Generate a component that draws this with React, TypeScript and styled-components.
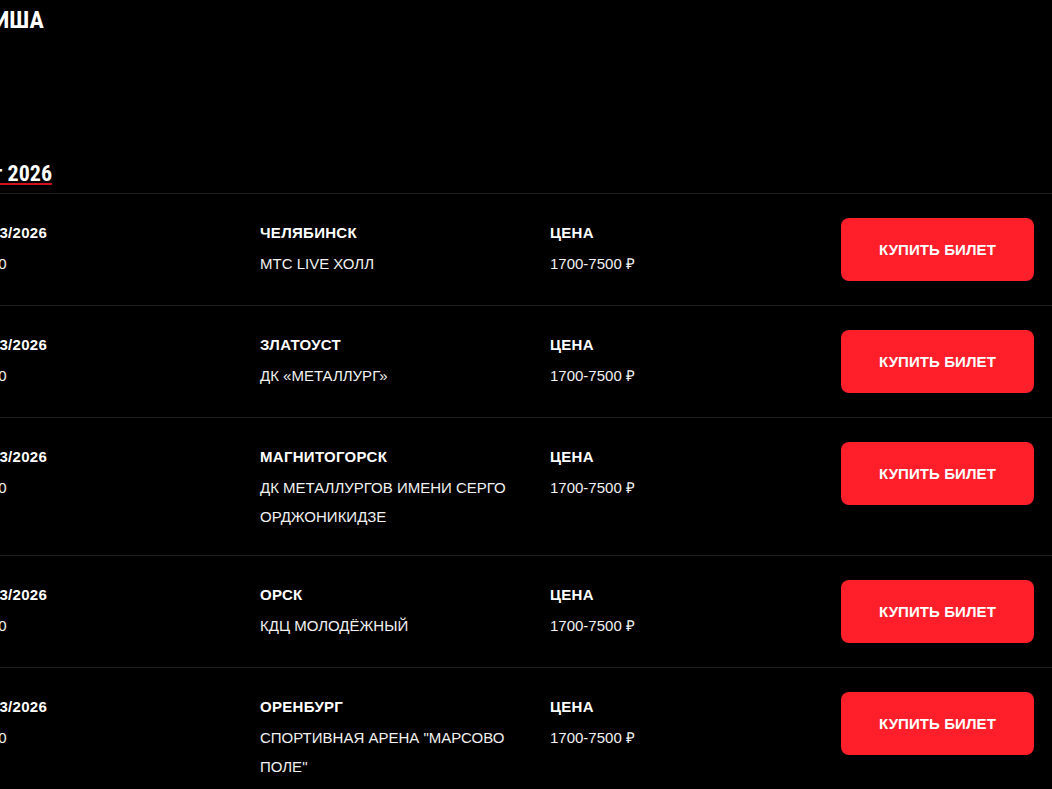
import React from "react";
import styled, { createGlobalStyle } from "styled-components";

const GlobalStyle = createGlobalStyle`
  html, body {
    margin: 0;
    padding: 0;
    background: #000;
  }
  body {
    font-family: "Liberation Sans", Arial, sans-serif;
    color: #fff;
    overflow: hidden;
  }
`;

const Page = styled.main`
  margin-left: -31px;
  width: calc(100% + 31px);
  background: #000;
  min-height: 789px;
`;

const Title = styled.h1`
  margin: 0;
  padding-top: 8px;
  margin-left: -6px;
  font-family: "Roboto Condensed", "DejaVu Sans Condensed", "Liberation Sans Narrow", sans-serif;
  font-weight: 700;
  font-size: 24px;
  line-height: 24px;
  text-transform: uppercase;
  color: #fff;
`;

const MonthHeading = styled.h2`
  display: inline-block;
  margin: 131px 0 8px 0;
  margin-left: -14px;
  font-family: "Roboto Condensed", "DejaVu Sans Condensed", "Liberation Sans Narrow", sans-serif;
  font-weight: 700;
  font-size: 22px;
  line-height: 22px;
  color: #fff;
  text-decoration: underline;
  text-decoration-color: #d0101a;
  text-decoration-thickness: 2px;
  text-underline-offset: 2px;
`;

const List = styled.section`
  border-top: 1px solid #1f1f1f;
`;

const Row = styled.div`
  display: grid;
  grid-template-columns: 291px 290px 1fr 193px;
  align-items: start;
  padding: 24px 18px 24px 0;
  border-bottom: 1px solid #1f1f1f;
`;

const Cell = styled.div<{ $padRight?: number }>`
  display: flex;
  flex-direction: column;
  gap: 2px;
  padding-right: ${(p) => p.$padRight ?? 0}px;
`;

const Label = styled.div`
  font-size: 15px;
  line-height: 29px;
  font-weight: 700;
  letter-spacing: 0.3px;
  text-transform: uppercase;
  color: #fff;
`;

const Value = styled.div`
  font-size: 15px;
  line-height: 29px;
  font-weight: 400;
  letter-spacing: 0;
  text-transform: uppercase;
  color: #f2f2f2;
`;

const BuyButton = styled.button`
  height: 63px;
  width: 193px;
  border: none;
  border-radius: 8px;
  background: #ff1f2b;
  color: #fff;
  font-family: "Liberation Sans", Arial, sans-serif;
  font-weight: 700;
  font-size: 15px;
  letter-spacing: 0.1px;
  text-transform: uppercase;
  cursor: pointer;
`;

type EventItem = {
  date: string;
  time: string;
  city: string;
  venue: string;
  price: string;
};

const events: EventItem[] = [
  { date: "12/03/2026", time: "19:00", city: "Челябинск", venue: "МТС Live Холл", price: "1700-7500 ₽" },
  { date: "13/03/2026", time: "19:00", city: "Златоуст", venue: "ДК «Металлург»", price: "1700-7500 ₽" },
  {
    date: "14/03/2026",
    time: "19:00",
    city: "Магнитогорск",
    venue: "ДК Металлургов имени Серго Орджоникидзе",
    price: "1700-7500 ₽",
  },
  { date: "16/03/2026", time: "19:00", city: "Орск", venue: "КДЦ Молодёжный", price: "1700-7500 ₽" },
  {
    date: "17/03/2026",
    time: "19:00",
    city: "Оренбург",
    venue: 'Спортивная арена "Марсово поле"',
    price: "1700-7500 ₽",
  },
];

export default function App() {
  return (
    <>
      <GlobalStyle />
      <Page>
        <Title>Афиша</Title>
        <MonthHeading>Март 2026</MonthHeading>
        <List>
          {events.map((e) => (
            <Row key={e.date + e.city}>
              <Cell>
                <Label>{e.date}</Label>
                <Value>{e.time}</Value>
              </Cell>
              <Cell $padRight={30}>
                <Label>{e.city}</Label>
                <Value>{e.venue}</Value>
              </Cell>
              <Cell>
                <Label>Цена</Label>
                <Value>{e.price}</Value>
              </Cell>
              <BuyButton>Купить билет</BuyButton>
            </Row>
          ))}
        </List>
      </Page>
    </>
  );
}
